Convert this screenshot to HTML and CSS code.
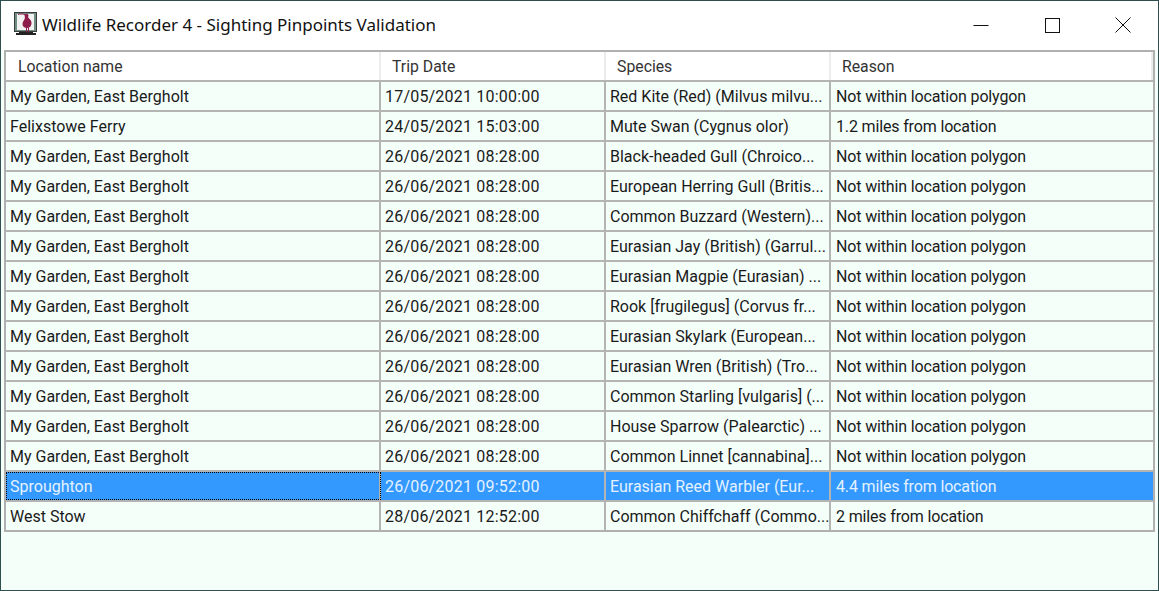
FILE: index.html
```html
<!DOCTYPE html>
<html lang="en">
<head>
<meta charset="utf-8">
<title>Wildlife Recorder 4 - Sighting Pinpoints Validation</title>
<link rel="stylesheet" href="styles.css">
</head>
<body>
<div class="window">
  <header class="titlebar">
    <svg class="app-icon" width="24" height="24" viewBox="0 0 24 24">
      <rect x="0.500" y="0.500" width="22" height="19" fill="#6f8f85" stroke="#3a3a3a"/>
      <rect x="3" y="2" width="17" height="16" fill="#f2f2f2"/>
      <path d="M5 20h14v1h3v2H2v-2h3z" fill="#222"/>
      <path d="M4 2.500c2-.8 5-.8 7 .3" stroke="#8e1c4a" fill="none"/>
      <circle cx="12.500" cy="3.800" r="2" fill="#8e1c4a"/>
      <path d="M11 5l3 0c.3 1.500 3.500 2.500 3.500 6 0 3-2 5-4.500 5s-4.500-1.500-4.500-4c0-3 2.500-4 2.500-7z" fill="#8e1c4a"/>
      <path d="M12.500 15.500v5M14.500 15.500v5" stroke="#8e1c4a" fill="none"/>
    </svg>
    <span class="title">Wildlife Recorder 4 - Sighting Pinpoints Validation</span>
    <div class="controls">
      <span class="ctl"><svg width="16" height="16" viewBox="0 0 16 16"><path d="M0.500 8.500h15" stroke="#111" fill="none"/></svg></span>
      <span class="ctl"><svg width="16" height="16" viewBox="0 0 16 16"><rect x="1.500" y="1.500" width="14" height="14" stroke="#111" fill="none"/></svg></span>
      <span class="ctl"><svg width="16" height="16" viewBox="0 0 16 16"><path d="M.5.500l15 15M15.500.500l-15 15" stroke="#111" fill="none"/></svg></span>
    </div>
  </header>
  <main class="content">
    <div class="grid">
      <div class="row head"><div class="cell">Location name</div><div class="cell">Trip Date</div><div class="cell">Species</div><div class="cell">Reason</div></div>
      <div class="row"><div class="cell">My Garden, East Bergholt</div><div class="cell">17/05/2021 10:00:00</div><div class="cell">Red Kite (Red) (Milvus milvu...</div><div class="cell">Not within location polygon</div></div>
      <div class="row"><div class="cell">Felixstowe Ferry</div><div class="cell">24/05/2021 15:03:00</div><div class="cell">Mute Swan (Cygnus olor)</div><div class="cell">1.2 miles from location</div></div>
      <div class="row"><div class="cell">My Garden, East Bergholt</div><div class="cell">26/06/2021 08:28:00</div><div class="cell">Black-headed Gull (Chroico...</div><div class="cell">Not within location polygon</div></div>
      <div class="row"><div class="cell">My Garden, East Bergholt</div><div class="cell">26/06/2021 08:28:00</div><div class="cell">European Herring Gull (Britis...</div><div class="cell">Not within location polygon</div></div>
      <div class="row"><div class="cell">My Garden, East Bergholt</div><div class="cell">26/06/2021 08:28:00</div><div class="cell">Common Buzzard (Western)...</div><div class="cell">Not within location polygon</div></div>
      <div class="row"><div class="cell">My Garden, East Bergholt</div><div class="cell">26/06/2021 08:28:00</div><div class="cell">Eurasian Jay (British) (Garrul...</div><div class="cell">Not within location polygon</div></div>
      <div class="row"><div class="cell">My Garden, East Bergholt</div><div class="cell">26/06/2021 08:28:00</div><div class="cell">Eurasian Magpie (Eurasian) ...</div><div class="cell">Not within location polygon</div></div>
      <div class="row"><div class="cell">My Garden, East Bergholt</div><div class="cell">26/06/2021 08:28:00</div><div class="cell">Rook [frugilegus] (Corvus fr...</div><div class="cell">Not within location polygon</div></div>
      <div class="row"><div class="cell">My Garden, East Bergholt</div><div class="cell">26/06/2021 08:28:00</div><div class="cell">Eurasian Skylark (European...</div><div class="cell">Not within location polygon</div></div>
      <div class="row"><div class="cell">My Garden, East Bergholt</div><div class="cell">26/06/2021 08:28:00</div><div class="cell">Eurasian Wren (British) (Tro...</div><div class="cell">Not within location polygon</div></div>
      <div class="row"><div class="cell">My Garden, East Bergholt</div><div class="cell">26/06/2021 08:28:00</div><div class="cell">Common Starling [vulgaris] (...</div><div class="cell">Not within location polygon</div></div>
      <div class="row"><div class="cell">My Garden, East Bergholt</div><div class="cell">26/06/2021 08:28:00</div><div class="cell">House Sparrow (Palearctic) ...</div><div class="cell">Not within location polygon</div></div>
      <div class="row"><div class="cell">My Garden, East Bergholt</div><div class="cell">26/06/2021 08:28:00</div><div class="cell">Common Linnet [cannabina]...</div><div class="cell">Not within location polygon</div></div>
      <div class="row selected"><div class="cell focus">Sproughton</div><div class="cell">26/06/2021 09:52:00</div><div class="cell">Eurasian Reed Warbler (Eur...</div><div class="cell">4.4 miles from location</div></div>
      <div class="row"><div class="cell">West Stow</div><div class="cell">28/06/2021 12:52:00</div><div class="cell">Common Chiffchaff (Commo...</div><div class="cell">2 miles from location</div></div>
    </div>
  </main>
</div>
</body>
</html>
```
FILE: styles.css
```css
* { box-sizing: border-box; }
html, body { margin: 0; height: 100%; }
body { font-family: Roboto, "Noto Sans", sans-serif; color: #111; background: #f5fffa; overflow: hidden; }
.window { width: 1159px; height: 591px; border: 1px solid #2f4f4f; display: flex; flex-direction: column; background: #f5fffa; }
.titlebar { height: 49px; background: #fff; display: flex; align-items: center; padding: 0 0 3px 13px; flex: none; }
.app-icon { flex: none; margin-right: 4px; }
.title { font-family: "Noto Sans", sans-serif; font-size: 17px; color: #111; }
.controls { margin-left: auto; display: flex; padding-top: 2px; }
.ctl { width: 71px; height: 32px; display: flex; align-items: center; justify-content: center; }
.content { flex: 1; padding: 0 3px; }
.grid { border: 2px solid #b0b0b0; width: 1151px; }
.row { display: grid; grid-template-columns: 375px 225px 225px 1fr; height: 30px; border-top: 2px solid #b4b4b4; background: #f5fffa; }
.row.head { height: 28px; border-top: 0; background: #fff; }
.cell { font-size: 16px; line-height: 29px; padding-left: 4px; white-space: nowrap; overflow: hidden; border-right: 2px solid #b4b4b4; color: #1a1a1a; }
.cell:nth-child(2) { letter-spacing: 0.2px; }
.cell:last-child { border-right: 0; letter-spacing: -0.15px; padding-left: 5px; }
.head .cell { font-size: 15.800px; letter-spacing: 0; padding-left: 11px; border-right: 2px solid #ececec; line-height: 30px; color: #333; }
.head .cell:first-child { padding-left: 12px; }
.selected { background: #3399ff; }
.selected .cell { color: #e4f1ff; }
.cell.focus { outline: 1px dotted #000; outline-offset: -1px; }
```
